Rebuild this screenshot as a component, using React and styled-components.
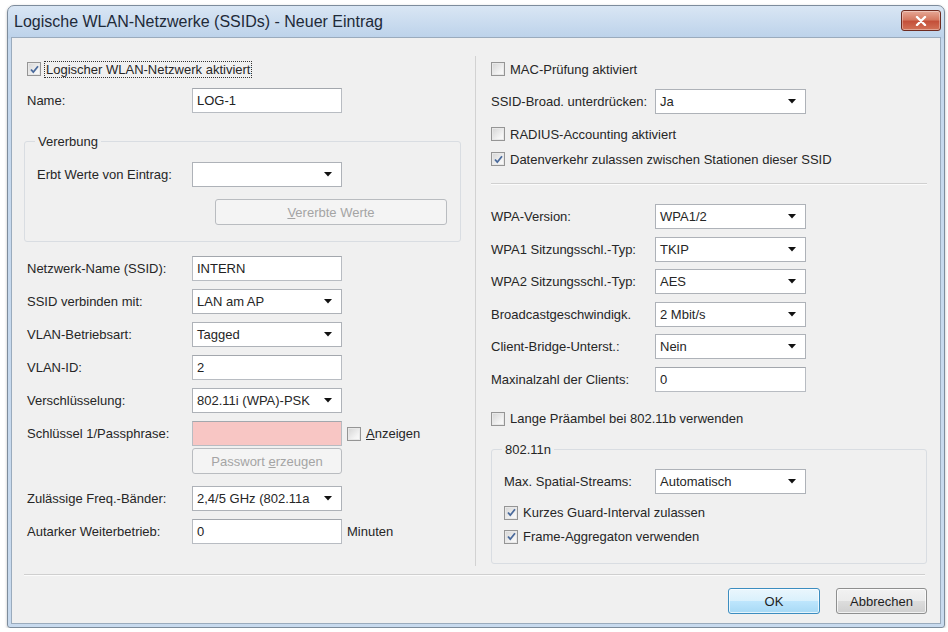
import React from 'react';
import styled, { createGlobalStyle } from 'styled-components';

const GlobalStyle = createGlobalStyle`
  html, body {
    margin: 0;
    padding: 0;
    background: #ffffff;
  }
  body {
    font-family: 'Liberation Sans', Arial, sans-serif;
    font-size: 13px;
    color: #262626;
  }
`;

const CheckMark = () => (
  <svg width="11" height="11" viewBox="0 0 11 11">
    <path d="M2 5.5 L4.3 8.2 L9 2.2" fill="none" stroke="#4a6a9c" strokeWidth="1.8" />
  </svg>
);

const Arrow = () => (
  <svg width="8" height="5" viewBox="0 0 8 5">
    <path d="M0 0 H8 L4 4.5 Z" fill="#111" />
  </svg>
);

const CheckItem = ({ checked, focus, children, mt }) => (
  <CheckRow $mt={mt}>
    <Box>{checked && <CheckMark />}</Box>
    <CheckText $focus={focus}>{children}</CheckText>
  </CheckRow>
);

const Combo = ({ value, w }) => (
  <ComboBox $w={w}>
    <span>{value}</span>
    <Arrow />
  </ComboBox>
);

const Field = ({ label, lw, children, mt }) => (
  <Row $mt={mt}>
    <Label $w={lw}>{label}</Label>
    {children}
  </Row>
);

export default function App() {
  return (
    <>
      <GlobalStyle />
      <Window>
        <TitleBar>
          <Title>Logische WLAN-Netzwerke (SSIDs) - Neuer Eintrag</Title>
          <CloseButton>
            <svg width="12" height="10" viewBox="0 0 12 10">
              <path d="M2 1 L10 9 M10 1 L2 9" stroke="#fff" strokeWidth="2.4" strokeLinecap="round" />
            </svg>
          </CloseButton>
        </TitleBar>
        <Content>
          <Columns>
            <LeftCol>
              <CheckItem checked focus mt={21}>Logischer WLAN-Netzwerk aktiviert</CheckItem>
              <Field label="Name:" lw={165} mt={9}>
                <TextBox readOnly value="LOG-1" />
              </Field>

              <Group $mt={21} $mr={14} $ml={-3}>
                <Legend>Vererbung</Legend>
                <Field label="Erbt Werte von Eintrag:" lw={155} mt={13}>
                  <Combo value="" />
                </Field>
                <ButtonRow>
                  <Button disabled $w={232}>
                    <u>V</u>ererbte Werte
                  </Button>
                </ButtonRow>
              </Group>

              <FieldStack $mt={14}>
                <Field label="Netzwerk-Name (SSID):" lw={165}>
                  <TextBox readOnly value="INTERN" />
                </Field>
                <Field label="SSID verbinden mit:" lw={165}>
                  <Combo value="LAN am AP" />
                </Field>
                <Field label="VLAN-Betriebsart:" lw={165}>
                  <Combo value="Tagged" />
                </Field>
                <Field label="VLAN-ID:" lw={165}>
                  <TextBox readOnly value="2" />
                </Field>
                <Field label="Verschlüsselung:" lw={165}>
                  <Combo value="802.11i (WPA)-PSK" />
                </Field>
                <Field label="Schlüssel 1/Passphrase:" lw={165}>
                  <TextBox readOnly value="" $error />
                  <InlineCheck>
                    <Box />
                    <span><u>A</u>nzeigen</span>
                  </InlineCheck>
                </Field>
              </FieldStack>
              <Indent>
                <Button disabled $w={150}>
                  Passwort <u>e</u>rzeugen
                </Button>
              </Indent>
              <FieldStack $mt={12}>
                <Field label="Zulässige Freq.-Bänder:" lw={165}>
                  <Combo value="2,4/5 GHz (802.11a" />
                </Field>
                <Field label="Autarker Weiterbetrieb:" lw={165}>
                  <TextBox readOnly value="0" />
                  <Unit>Minuten</Unit>
                </Field>
              </FieldStack>
            </LeftCol>

            <RightCol>
              <CheckItem mt={21}>MAC-Prüfung aktiviert</CheckItem>
              <Field label="SSID-Broad. unterdrücken:" lw={164} mt={10}>
                <Combo value="Ja" w={151} />
              </Field>
              <CheckItem mt={10}>RADIUS-Accounting aktiviert</CheckItem>
              <CheckItem checked mt={5}>Datenverkehr zulassen zwischen Stationen dieser SSID</CheckItem>
              <Rule $mt={14} />

              <FieldStack $mt={19} $gap={7.6}>
                <Field label="WPA-Version:" lw={164}>
                  <Combo value="WPA1/2" w={151} />
                </Field>
                <Field label="WPA1 Sitzungsschl.-Typ:" lw={164}>
                  <Combo value="TKIP" w={151} />
                </Field>
                <Field label="WPA2 Sitzungsschl.-Typ:" lw={164}>
                  <Combo value="AES" w={151} />
                </Field>
                <Field label="Broadcastgeschwindigk." lw={164}>
                  <Combo value="2 Mbit/s" w={151} />
                </Field>
                <Field label="Client-Bridge-Unterst.:" lw={164}>
                  <Combo value="Nein" w={151} />
                </Field>
                <Field label="Maxinalzahl der Clients:" lw={164}>
                  <TextBox readOnly value="0" $w={151} />
                </Field>
              </FieldStack>
              <CheckItem mt={17}>Lange Präambel bei 802.11b verwenden</CheckItem>

              <Group $mt={13} $mr={0} $ml={0}>
                <Legend>802.11n</Legend>
                <Field label="Max. Spatial-Streams:" lw={151} mt={12}>
                  <Combo value="Automatisch" w={151} />
                </Field>
                <CheckItem checked mt={9}>Kurzes Guard-Interval zulassen</CheckItem>
                <CheckItem checked mt={4}>Frame-Aggregaton verwenden</CheckItem>
              </Group>
            </RightCol>
          </Columns>

          <Separator />
          <Footer>
            <DialogButton $default>OK</DialogButton>
            <DialogButton>Abbrechen</DialogButton>
          </Footer>
        </Content>
      </Window>
    </>
  );
}

const Window = styled.div`
  box-sizing: border-box;
  margin: 5px 0 0 7px;
  width: 938px;
  height: 623px;
  display: flex;
  flex-direction: column;
  padding: 0 3px 3px;
  border: 1px solid #7d8c9c;
  border-radius: 7px 7px 3px 3px;
  background: linear-gradient(#d9e6f4, #bcd2ea 32px, #c5d8ed 33px, #c8daee);
  box-shadow: 0 1px 3px rgba(0, 0, 0, 0.25);
`;

const TitleBar = styled.div`
  height: 31px;
  flex: none;
  display: flex;
  align-items: center;
  justify-content: space-between;
  padding: 0 0 0 3px;
`;

const Title = styled.span`
  font-size: 16px;
  color: #1e2a38;
`;

const CloseButton = styled.div`
  width: 38px;
  height: 19px;
  margin: -2px 0 0 0;
  display: flex;
  align-items: center;
  justify-content: center;
  border: 1px solid #6e2b20;
  border-radius: 3px;
  background: linear-gradient(#e6a896, #d57a62 45%, #c4503a 55%, #d27258);
  box-shadow: inset 0 0 0 1px rgba(255, 255, 255, 0.35);
`;

const Content = styled.div`
  flex: 1;
  display: flex;
  flex-direction: column;
  background: #f0f0f0;
  border: 1px solid #9aabbd;
`;

const Columns = styled.div`
  height: 536px;
  display: grid;
  grid-template-columns: 463px 1px 1fr;
  &::before {
    content: '';
    grid-column: 2;
    grid-row: 1;
    margin: 18px 0 8px;
    background: #d2d2d2;
  }
`;

const LeftCol = styled.div`
  grid-column: 1;
  grid-row: 1;
  display: flex;
  flex-direction: column;
  padding-left: 15px;
`;

const RightCol = styled.div`
  grid-column: 3;
  grid-row: 1;
  display: flex;
  flex-direction: column;
  padding: 0 13px 0 15px;
`;

const Row = styled.div`
  display: flex;
  align-items: center;
  height: 25px;
  margin-top: ${(p) => p.$mt || 0}px;
`;

const Label = styled.span`
  width: ${(p) => p.$w}px;
  flex: none;
  white-space: nowrap;
`;

const TextBox = styled.input`
  box-sizing: border-box;
  width: ${(p) => p.$w || 150}px;
  height: 25px;
  margin: 0;
  padding: 0 4px;
  font: inherit;
  color: #222;
  border: 1px solid #b8bcc2;
  border-top-color: #a3a7ad;
  background: ${(p) => (p.$error ? '#f8c6c4' : '#ffffff')};
  outline: none;
`;

const ComboBox = styled.div`
  box-sizing: border-box;
  width: ${(p) => p.$w || 150}px;
  height: 25px;
  display: flex;
  align-items: center;
  justify-content: space-between;
  padding: 0 9px 0 4px;
  border: 1px solid #aeb2b8;
  background: #ffffff;
  white-space: nowrap;
`;

const CheckRow = styled.div`
  display: flex;
  align-items: center;
  height: 20px;
  margin-top: ${(p) => p.$mt || 0}px;
`;

const Box = styled.span`
  box-sizing: border-box;
  width: 14px;
  height: 14px;
  flex: none;
  display: flex;
  align-items: center;
  justify-content: center;
  border: 1px solid #959595;
  background: linear-gradient(135deg, #d4d4d4, #f4f4f4 70%, #fbfbfb);
  box-shadow: inset 0 0 0 1px #e8e8e8;
`;

const CheckText = styled.span`
  margin-left: 4px;
  padding: 0 1px;
  white-space: nowrap;
  outline: ${(p) => (p.$focus ? '1px dotted #333' : 'none')};
`;

const InlineCheck = styled.div`
  display: flex;
  align-items: center;
  margin-left: 5px;
  gap: 5px;
`;

const Unit = styled.span`
  margin-left: 5px;
`;

const Group = styled.fieldset`
  margin: ${(p) => p.$mt}px ${(p) => p.$mr}px 0 ${(p) => p.$ml}px;
  padding: 0 13px 16px 12px;
  border: 1px solid #d9dde2;
  border-radius: 3px;
  min-width: 0;
`;

const Legend = styled.legend`
  padding: 0 3px;
  margin-left: -2px;
  font-size: 13px;
`;

const ButtonRow = styled.div`
  display: flex;
  justify-content: flex-end;
  margin-top: 12px;
`;

const Button = styled.button`
  box-sizing: border-box;
  width: ${(p) => p.$w}px;
  height: 26px;
  padding: 0;
  font: inherit;
  color: #a4a4a4;
  border: 1px solid #b9bcc0;
  border-radius: 3px;
  background: #f4f4f4;
`;

const Indent = styled.div`
  margin: 2px 0 0 165px;
`;

const FieldStack = styled.div`
  display: flex;
  flex-direction: column;
  gap: ${(p) => p.$gap ?? 8}px;
  margin-top: ${(p) => p.$mt || 0}px;
`;

const Rule = styled.div`
  height: 1px;
  margin-top: ${(p) => p.$mt}px;
  background: #d0d0d0;
  border-bottom: 1px solid #fbfbfb;
`;

const Separator = styled.div`
  height: 1px;
  margin: 0 15px 0 12px;
  background: #cfcfcf;
  border-bottom: 1px solid #fbfbfb;
`;

const Footer = styled.div`
  display: flex;
  justify-content: flex-end;
  gap: 16px;
  padding: 12px 13px 0 0;
`;

const DialogButton = styled.button`
  box-sizing: border-box;
  width: ${(p) => (p.$default ? 92 : 91)}px;
  height: 26px;
  padding: 0;
  font: inherit;
  color: #1e1e1e;
  border: 1px solid ${(p) => (p.$default ? '#3c8dc0' : '#8e8f8f')};
  border-radius: 3px;
  background: ${(p) =>
    p.$default
      ? 'linear-gradient(#eaf6fd, #d9f0fc 50%, #bee6fd 50%, #a7d9f5)'
      : 'linear-gradient(#f2f2f2, #ebebeb 50%, #dddddd 50%, #cfcfcf)'};
  box-shadow: inset 0 0 0 1px rgba(255, 255, 255, 0.7);
`;
